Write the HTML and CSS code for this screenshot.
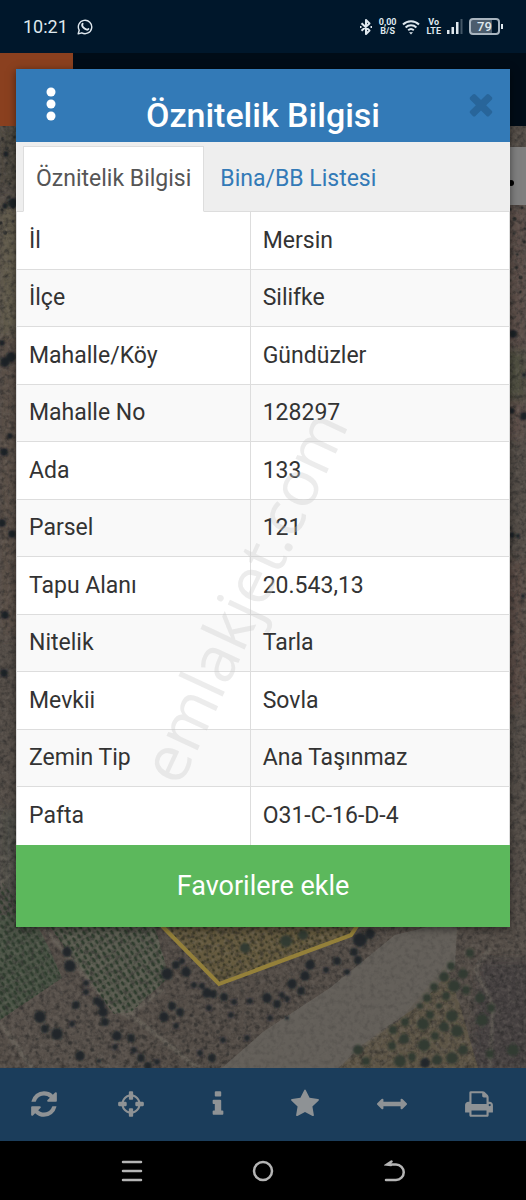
FILE: index.html
```
<!DOCTYPE html>
<html lang="tr">
<head>
    <meta charset="UTF-8">
    <meta name="viewport" content="width=device-width, initial-scale=1.0">
    <title>Öznitelik Bilgisi</title>
    <link rel="stylesheet" href="styles.css">
</head>
<body>
    <!-- Status bar -->
    <div class="status-bar">
        <span class="clock">10:21</span>
        <svg class="whatsapp" width="16" height="16" viewBox="0 0 16 16" fill="none" stroke="currentColor" stroke-width="1.4">
            <path d="M1.2 14.8l1-3.6A6.7 6.7 0 1 1 4.8 13.8z" stroke-linejoin="round"/>
            <path d="M5.6 4.8c-1 1.600.3 3.600 1.900 4.800s3.200 1.500 3.900.4" stroke-width="1.9" stroke-linecap="round"/>
        </svg>
        <div class="status-icons">
            <svg width="14" height="18" viewBox="0 0 14 18" fill="none" stroke="currentColor" stroke-width="2" stroke-linejoin="round">
                <path d="M2.500 5.200l8 7.300L7 16V2l3.500 3.500-8 7.300"/>
                <path d="M1 9h1.500M11.500 9H13"/>
            </svg>
            <span class="stacked">0,00<br>B/S</span>
            <svg width="18" height="16" viewBox="0 0 18 16" fill="none" stroke="currentColor" stroke-width="2">
                <path d="M1 5.500a11.500 11.500 0 0 1 16 0M3.600 8.500a7.800 7.800 0 0 1 10.800 0M6.200 11.200a4.200 4.200 0 0 1 5.600 0"/>
                <path d="M7 13.200h4l-2 2.300z" fill="currentColor" stroke="none"/>
            </svg>
            <span class="stacked">Vo<br>LTE</span>
            <svg width="16" height="17" viewBox="0 0 16 17" fill="currentColor">
                <rect x="0" y="12" width="2.500" height="4"/>
                <rect x="4.500" y="9" width="2.500" height="7"/>
                <rect x="9" y="4" width="2.500" height="12"/>
                <rect x="13.500" y="1" width="2" height="15" opacity=".3"/>
            </svg>
            <span class="battery">79</span>
        </div>
    </div>

    <main class="app">
        <div class="app-header"><div class="logo"></div></div>

        <!-- Satellite map -->
        <div class="map">
            <svg viewBox="0 126 526 942" preserveAspectRatio="xMidYMax slice" aria-hidden="true">
                <defs>
                    <filter id="grain" x="0" y="0" width="100%" height="100%" color-interpolation-filters="sRGB">
                        <feTurbulence type="fractalNoise" baseFrequency=".2" numOctaves="3" seed="8"/>
                        <feColorMatrix values="0 0 0 0 .14  0 0 0 0 .14  0 0 0 0 .14  2 0 0 0 -.85"/>
                    </filter>
                    <filter id="light" x="0" y="0" width="100%" height="100%" color-interpolation-filters="sRGB">
                        <feTurbulence type="fractalNoise" baseFrequency=".25" numOctaves="3" seed="31"/>
                        <feColorMatrix values="0 0 0 0 .5  0 0 0 0 .47  0 0 0 0 .44  1.800 0 0 0 -.75"/>
                    </filter>
                    <filter id="soft"><feGaussianBlur stdDeviation=".9"/></filter>
                    <filter id="haze"><feGaussianBlur stdDeviation="5"/></filter>
                    <pattern id="rows" width="7" height="6" patternUnits="userSpaceOnUse" patternTransform="rotate(58)">
                        <ellipse cx="3" cy="3" rx="2.600" ry="1.500" fill="#2b3a2b"/>
                    </pattern>
                    <pattern id="rows-wide" width="6" height="6" patternUnits="userSpaceOnUse" patternTransform="rotate(-28)">
                        <circle cx="3" cy="3" r="1.400" fill="#3d3b28"/>
                    </pattern>
                    <pattern id="scrub" width="23" height="27" patternUnits="userSpaceOnUse" patternTransform="rotate(17)">
                        <g fill="#2a2b2a">
                            <circle cx="4" cy="5" r="2"/>
                            <circle cx="17" cy="11" r="1.600"/>
                            <circle cx="8" cy="19" r="1.400"/>
                            <circle cx="20" cy="24" r="1.800"/>
                        </g>
                    </pattern>
                </defs>

                <rect y="126" width="526" height="942" fill="#544d47"/>
                <g filter="url(#haze)">
                    <path d="M0 126h22v60H0z" fill="#4c463d"/>
                    <path d="M0 205h22v130H0z" fill="#625c4b"/>
                    <path d="M0 335h22v300H0z" fill="#5a4f46"/>
                    <path d="M500 205h26v235h-26z" fill="#5d5049"/>
                    <path d="M500 350h26v50h-26z" fill="#504f40"/>
                    <path d="M500 560h26v150h-26z" fill="#5a4b45"/>
                    <path d="M0 810h22v120H0z" fill="#4e4e46"/>
                    <path d="M480 960h50v110h-60z" fill="#453f40"/>
                </g>
                <path d="M0 126h18v110H0zM508 205h18v90h-18z" fill="url(#scrub)"/>

                <!-- Fields -->
                <path d="M0 915h32l18 35 12 28L0 1020z" fill="#4b5446"/>
                <path d="M45 920h108l16 57-38 35-17 2z" fill="#5a5c50"/>
                <path d="M162 926l57 58 133-49 6-15z" fill="#655a3e"/>
                <path d="M395 935l62-15-2 45-35 40-40 26-22 18-20 19H222l41-36 67-44z" fill="#69655f"/>
                <path d="M400 1020l45-55 15 40 18 63H340l20-22z" fill="#5d5546"/>
                <path d="M0 1020l62-42 52 34 30 56H30z" fill="#57504a"/>
                <g fill="none" stroke="#6d685f" stroke-width="4" opacity=".75" filter="url(#soft)">
                    <path d="M38 920l25 30 48 58 17 8 35-27M128 1012l70 56M0 1023l32 45"/>
                    <path d="M457 926l-6 35-50 54-65 53M490 948l-15 22 18 35-3 62" stroke-width="3"/>
                    <path d="M0 857q14 2 10 18L0 883" stroke-width="2"/>
                </g>

                <rect y="126" width="526" height="942" filter="url(#grain)" opacity=".7"/>
                <rect y="126" width="526" height="942" filter="url(#light)" opacity=".4"/>

                <path d="M395 935l62-15-2 45-35 40-40 26-22 18-20 19H222l41-36 67-44z" fill="#625e59" opacity=".7"/>
                <path d="M0 880l32 40 30 58L0 1020z" fill="url(#rows)" opacity=".85"/>
                <path d="M45 920h108l16 57-38 35-17 2z" fill="url(#rows)" opacity=".9"/>
                <path d="M162 926l57 58 133-49 6-15z" fill="url(#rows-wide)"/>
                <path d="M30 1030l50-30 60 30 70-30 50 10-40 58H40z" fill="url(#scrub)" opacity=".6"/>

                <!-- Trees -->
                <g fill="#22282b" filter="url(#soft)">
                    <circle cx="67" cy="952" r="5"/><circle cx="70" cy="966" r="6"/><circle cx="86" cy="983" r="3"/>
                    <circle cx="86" cy="992" r="3"/><circle cx="97" cy="1001" r="4"/><circle cx="101" cy="1004" r="4"/>
                    <circle cx="103" cy="1012" r="5"/><circle cx="105" cy="1022" r="4"/><circle cx="40" cy="1017" r="6"/>
                    <circle cx="45" cy="1029" r="4"/><circle cx="57" cy="1034" r="6"/><circle cx="76" cy="1005" r="4"/>
                    <circle cx="72" cy="1024" r="3"/><circle cx="80" cy="1056" r="5"/><circle cx="99" cy="1061" r="2"/>
                    <circle cx="117" cy="1036" r="5"/><circle cx="131" cy="1038" r="4"/><circle cx="115" cy="1047" r="3"/>
                    <circle cx="134" cy="1050" r="3"/><circle cx="141" cy="1058" r="4"/><circle cx="157" cy="1062" r="3"/>
                    <circle cx="148" cy="1066" r="4"/><circle cx="167" cy="974" r="6"/><circle cx="176" cy="965" r="4"/>
                    <circle cx="186" cy="972" r="5"/><circle cx="182" cy="961" r="3"/><circle cx="172" cy="1006" r="4"/>
                    <circle cx="180" cy="1012" r="4"/><circle cx="164" cy="1017" r="5"/><circle cx="176" cy="1026" r="3"/>
                    <circle cx="194" cy="985" r="3"/><circle cx="202" cy="986" r="3"/><circle cx="207" cy="993" r="5"/>
                    <circle cx="213" cy="994" r="4"/><circle cx="224" cy="997" r="4"/><circle cx="234" cy="1002" r="3"/>
                    <circle cx="209" cy="1008" r="3"/><circle cx="250" cy="1001" r="3"/><circle cx="231" cy="1015" r="3"/>
                    <circle cx="223" cy="1040" r="3"/><circle cx="247" cy="1038" r="3"/><circle cx="200" cy="1053" r="3"/>
                    <circle cx="212" cy="1058" r="4"/><circle cx="370" cy="934" r="5"/><circle cx="360" cy="940" r="7"/>
                    <circle cx="354" cy="952" r="4"/><circle cx="358" cy="960" r="4"/><circle cx="337" cy="961" r="4"/>
                    <circle cx="347" cy="972" r="3"/><circle cx="326" cy="970" r="3"/><circle cx="310" cy="965" r="5"/>
                    <circle cx="305" cy="976" r="5"/><circle cx="292" cy="984" r="5"/><circle cx="301" cy="991" r="4"/>
                    <circle cx="267" cy="998" r="5"/><circle cx="282" cy="995" r="3"/><circle cx="287" cy="999" r="3"/>
                    <circle cx="277" cy="1004" r="4"/><circle cx="270" cy="1018" r="3"/><circle cx="287" cy="1018" r="2"/>
                    <circle cx="425" cy="1063" r="5"/>
                </g>
                <g fill="#303a32" filter="url(#soft)">
                    <circle cx="245" cy="948" r="5"/><circle cx="286" cy="941" r="6"/><circle cx="303" cy="935" r="5"/>
                    <circle cx="451" cy="966" r="4"/><circle cx="444" cy="977" r="5"/><circle cx="454" cy="986" r="6"/>
                    <circle cx="434" cy="987" r="4"/><circle cx="446" cy="996" r="4"/><circle cx="427" cy="998" r="4"/>
                    <circle cx="439" cy="1006" r="3"/><circle cx="420" cy="1006" r="3"/><circle cx="452" cy="1016" r="6"/>
                    <circle cx="430" cy="1015" r="4"/><circle cx="423" cy="1024" r="6"/><circle cx="405" cy="1022" r="4"/>
                    <circle cx="393" cy="1030" r="4"/><circle cx="444" cy="1027" r="5"/><circle cx="457" cy="1031" r="6"/>
                    <circle cx="435" cy="1036" r="4"/><circle cx="404" cy="1039" r="5"/><circle cx="424" cy="1045" r="6"/>
                    <circle cx="392" cy="1046" r="4"/><circle cx="463" cy="1050" r="5"/><circle cx="412" cy="1057" r="4"/>
                    <circle cx="400" cy="1061" r="6"/><circle cx="437" cy="1060" r="5"/><circle cx="452" cy="1058" r="6"/>
                    <circle cx="358" cy="1050" r="5"/><circle cx="366" cy="1061" r="4"/><circle cx="490" cy="1054" r="4"/>
                    <circle cx="513" cy="1050" r="6"/><circle cx="482" cy="1020" r="6"/><circle cx="491" cy="1008" r="4"/>
                    <circle cx="480" cy="998" r="5"/><circle cx="463" cy="974" r="5"/><circle cx="466" cy="990" r="4"/>
                    <circle cx="470" cy="953" r="4"/>
                </g>
                <!-- Trees on the side strips -->
                <g fill="#1c2226" filter="url(#soft)">
                    <circle cx="6" cy="154" r="3"/><circle cx="13" cy="203" r="5"/><circle cx="5" cy="206" r="3"/>
                    <circle cx="2" cy="343" r="3"/><circle cx="5" cy="362" r="5"/><circle cx="11" cy="357" r="5"/>
                    <circle cx="10" cy="436" r="3"/><circle cx="4" cy="452" r="4"/><circle cx="2" cy="523" r="4"/>
                    <circle cx="12" cy="534" r="4"/><circle cx="5" cy="615" r="4"/><circle cx="4" cy="673" r="4"/>
                    <circle cx="513" cy="334" r="4"/><circle cx="512" cy="411" r="3"/>
                    <circle cx="524" cy="416" r="4"/><circle cx="524" cy="375" r="2"/><circle cx="512" cy="535" r="3"/>
                    <circle cx="518" cy="536" r="2"/><circle cx="523" cy="596" r="2"/>
                </g>

                <path d="M162 926l57 58 132-49 8-12" fill="none" stroke="#94803a" stroke-width="4"/>
                <path d="M500 147h26v58h-26z" fill="#7f7f7f"/>
                <circle cx="511" cy="183" r="3"/>
            </svg>
        </div>

        <nav class="toolbar">
            <button aria-label="Yenile"><svg viewBox="0 0 1792 1792"><path d="M1639 1056q0 5-1 7-64 268-268 434.5t-478 166.5q-146 0-282.5-55t-243.5-157l-129 129q-19 19-45 19t-45-19-19-45v-448q0-26 19-45t45-19h448q26 0 45 19t19 45-19 45l-137 137q71 66 161 102t187 36q134 0 250-65t186-179q11-17 53-117 8-23 30-23h192q13 0 22.5 9.5t9.5 22.5zm25-800v448q0 26-19 45t-45 19h-448q-26 0-45-19t-19-45 19-45l138-138q-148-137-349-137-134 0-250 65t-186 179q-11 17-53 117-8 23-30 23h-199q-13 0-22.5-9.5t-9.5-22.5v-7q65-268 270-434.5t480-166.5q146 0 284 55.5t245 156.5l130-129q19-19 45-19t45 19 19 45z"/></svg></button>
            <button aria-label="Konum"><svg viewBox="0 0 1792 1792"><path d="M1325 1024h-109q-26 0-45-19t-19-45v-128q0-26 19-45t45-19h109q-32-108-112.5-188.5t-188.5-112.5v109q0 26-19 45t-45 19h-128q-26 0-45-19t-19-45v-109q-108 32-188.5 112.5t-112.5 188.5h109q26 0 45 19t19 45v128q0 26-19 45t-45 19h-109q32 108 112.5 188.5t188.5 112.5v-109q0-26 19-45t45-19h128q26 0 45 19t19 45v109q108-32 188.5-112.5t112.5-188.5zm339-192v128q0 26-19 45t-45 19h-143q-37 161-154.5 278.5t-278.5 154.5v143q0 26-19 45t-45 19h-128q-26 0-45-19t-19-45v-143q-161-37-278.5-154.5t-154.5-278.5h-143q-26 0-45-19t-19-45v-128q0-26 19-45t45-19h143q37-161 154.5-278.5t278.5-154.5v-143q0-26 19-45t45-19h128q26 0 45 19t19 45v143q161 37 278.5 154.5t154.5 278.5h143q26 0 45 19t19 45z"/></svg></button>
            <button aria-label="Bilgi"><svg viewBox="0 0 1792 1792"><path d="M1216 1344v128q0 26-19 45t-45 19h-512q-26 0-45-19t-19-45v-128q0-26 19-45t45-19h64v-384h-64q-26 0-45-19t-19-45v-128q0-26 19-45t45-19h384q26 0 45 19t19 45v576h64q26 0 45 19t19 45zm-128-1152v192q0 26-19 45t-45 19h-256q-26 0-45-19t-19-45v-192q0-26 19-45t45-19h256q26 0 45 19t19 45z"/></svg></button>
            <button aria-label="Favoriler"><svg viewBox="0 0 1792 1792"><path d="M1728 647q0 22-26 48l-363 354 86 500q1 7 1 20 0 21-10.5 35.5t-30.5 14.5q-19 0-40-12l-449-236-449 236q-22 12-40 12-21 0-31.5-14.5t-10.5-35.5q0-6 2-20l86-500-364-354q-25-27-25-48 0-37 56-46l502-73 225-455q19-41 49-41t49 41l225 455 502 73q56 9 56 46z"/></svg></button>
            <button aria-label="Ölçüm"><svg viewBox="0 0 1792 1792"><path d="M1792 896q0 26-19 45l-256 256q-19 19-45 19t-45-19-19-45v-128h-1024v128q0 26-19 45t-45 19-45-19l-256-256q-19-19-19-45t19-45l256-256q19-19 45-19t45 19 19 45v128h1024v-128q0-26 19-45t45-19 45 19l256 256q19 19 19 45z"/></svg></button>
            <button aria-label="Yazdır"><svg viewBox="0 0 1792 1792"><path d="M448 1536h896v-256h-896v256zm0-640h896v-384h-160q-40 0-68-28t-28-68v-160h-640v640zm1152 64q0-26-19-45t-45-19-45 19-19 45 19 45 45 19 45-19 19-45zm128 0v416q0 13-9.5 22.5t-22.5 9.5h-224v160q0 40-28 68t-68 28h-960q-40 0-68-28t-28-68v-160h-224q-13 0-22.5-9.5t-9.5-22.5v-416q0-79 56.5-135.5t135.5-56.5h64v-544q0-40 28-68t68-28h672q40 0 88 20t76 48l152 152q28 28 48 76t20 88v256h64q79 0 135.5 56.5t56.5 135.5z"/></svg></button>
        </nav>

        <!-- Parcel info dialog -->
        <section class="modal" role="dialog" aria-labelledby="modal-title">
            <header class="modal-header">
                <button class="menu-btn" aria-label="Menü">
                    <svg width="10" height="34" viewBox="0 0 10 34" fill="currentColor">
                        <circle cx="5" cy="5" r="4.500"/><circle cx="5" cy="17" r="4.500"/><circle cx="5" cy="29" r="4.500"/>
                    </svg>
                </button>
                <h1 id="modal-title">Öznitelik Bilgisi</h1>
                <button class="close-btn" aria-label="Kapat"><svg viewBox="0 0 1792 1792"><path d="M1490 1322q0 40-28 68l-136 136q-28 28-68 28t-68-28l-294-294-294 294q-28 28-68 28t-68-28l-136-136q-28-28-28-68t28-68l294-294-294-294q-28-28-28-68t28-68l136-136q28-28 68-28t68 28l294 294 294-294q28-28 68-28t68 28l136 136q28 28 28 68t-28 68l-294 294 294 294q28 28 28 68z"/></svg></button>
            </header>

            <div class="tabs">
                <a href="#oznitelik" class="tab active">Öznitelik Bilgisi</a>
                <a href="#bina" class="tab">Bina/BB Listesi</a>
            </div>

            <table class="info-table" id="oznitelik">
                <tbody>
                    <tr><th scope="row">İl</th><td>Mersin</td></tr>
                    <tr><th scope="row">İlçe</th><td>Silifke</td></tr>
                    <tr><th scope="row">Mahalle/Köy</th><td>Gündüzler</td></tr>
                    <tr><th scope="row">Mahalle No</th><td>128297</td></tr>
                    <tr><th scope="row">Ada</th><td>133</td></tr>
                    <tr><th scope="row">Parsel</th><td>121</td></tr>
                    <tr><th scope="row">Tapu Alanı</th><td>20.543,13</td></tr>
                    <tr><th scope="row">Nitelik</th><td>Tarla</td></tr>
                    <tr><th scope="row">Mevkii</th><td>Sovla</td></tr>
                    <tr><th scope="row">Zemin Tip</th><td>Ana Taşınmaz</td></tr>
                    <tr><th scope="row">Pafta</th><td>O31-C-16-D-4</td></tr>
                </tbody>
            </table>

            <button class="favorite-btn">Favorilere ekle</button>
            <span class="watermark">emlakjet.com</span>
        </section>
    </main>

    <!-- Android navigation -->
    <div class="system-nav">
        <button aria-label="Son uygulamalar">
            <svg width="22" height="22" viewBox="0 0 22 22"><path d="M2 2h18M2 11h18M2 20h18"/></svg>
        </button>
        <button aria-label="Ana ekran">
            <svg width="22" height="22" viewBox="0 0 22 22"><circle cx="11" cy="11" r="9"/></svg>
        </button>
        <button aria-label="Geri">
            <svg width="22" height="22" viewBox="0 0 22 22"><path d="M2 20h10a7.500 7.500 0 0 0 0-15.500H4M7.500 1.500L3 4.500l4 .5"/></svg>
        </button>
    </div>
</body>
</html>
```
FILE: styles.css
```
* {
    box-sizing: border-box;
}

body {
    margin: 0;
    min-height: 100vh;
    display: flex;
    flex-direction: column;
    background: #000;
    font-family: Roboto, "Liberation Sans", sans-serif;
}

button {
    display: flex;
    align-items: center;
    justify-content: center;
    padding: 0;
    border: none;
    background: none;
    font: inherit;
    cursor: pointer;
}

/* --- Status Bar --- */
.status-bar {
    height: 53px;
    display: flex;
    align-items: center;
    padding: 0 26px 0 23px;
    background: #00172b;
    color: #dfe8ee;
}

.clock {
    font-size: 18px;
}

.whatsapp {
    margin-left: 9px;
}

.status-icons {
    display: flex;
    align-items: center;
    gap: 6px;
    margin-left: auto;
}

.stacked {
    font-size: 9px;
    line-height: 9px;
    font-weight: 700;
    text-align: center;
}

.battery {
    position: relative;
    width: 31px;
    border: 2px solid #a9b5bf;
    border-radius: 4px;
    background: linear-gradient(90deg, #4c5d6d 79%, transparent 79%);
    font-size: 13px;
    line-height: 13px;
    font-weight: 500;
    text-align: center;
}

.battery::after {
    content: "";
    position: absolute;
    top: 4px;
    right: -5px;
    width: 2px;
    height: 5px;
    background: #dfe8ee;
}

/* --- App --- */
.app {
    position: relative;
    flex: 1;
    display: flex;
    flex-direction: column;
}

.app-header {
    height: 73px;
    background: #000c17;
}

.logo {
    width: 73px;
    height: 100%;
    background: #8a401f;
}

.map {
    position: relative;
    flex: 1;
    overflow: hidden;
    background: #544d47;
}

.map svg {
    position: absolute;
    width: 100%;
    height: 100%;
}

.toolbar {
    height: 73px;
    display: grid;
    grid-template-columns: repeat(6, 1fr);
    padding: 0 3px 2px 0;
    background: #1b3d5b;
}

.toolbar svg {
    width: 30px;
    height: 30px;
    fill: #8e9295;
}

/* --- Modal --- */
.modal {
    position: absolute;
    top: 16px;
    left: 16px;
    right: 16px;
    background: #fff;
    box-shadow: 0 2px 8px rgba(0, 0, 0, 0.5);
}

.modal-header {
    height: 73px;
    display: grid;
    grid-template-columns: 70px 1fr 70px;
    background: #337ab7;
    color: #fff;
}

.modal-header h1 {
    margin: 0;
    padding-top: 20px;
    font-size: 34px;
    line-height: 53px;
    font-weight: 500;
    text-align: center;
}

.menu-btn,
.close-btn {
    padding-bottom: 4px;
}

.menu-btn {
    color: #fff;
}

.close-btn {
    padding-left: 12px;
}

.close-btn svg {
    width: 34px;
    height: 34px;
    fill: #28659a;
}

/* --- Tabs --- */
.tabs {
    height: 70px;
    display: flex;
    gap: 3px;
    padding: 4px 7px 0;
    border-bottom: 1px solid #ddd;
    background: #eee;
}

.tab {
    height: 66px;
    padding: 0 12px;
    border: 1px solid transparent;
    color: #337ab7;
    font-size: 23px;
    line-height: 64px;
    text-decoration: none;
}

.tab.active {
    border-color: #ddd;
    border-bottom-color: #fff;
    background: #fff;
    color: #555;
}

/* --- Info Table --- */
.info-table {
    width: 100%;
    border: 1px solid #ddd;
    border-width: 0 1px;
    border-collapse: separate;
    border-spacing: 0;
    table-layout: fixed;
    color: #333;
    font-size: 23px;
    line-height: 28px;
}

.info-table tr {
    height: 58px;
}

.info-table tr:nth-child(even) {
    height: 57px;
    background: #f9f9f9;
}

.info-table th,
.info-table td {
    padding: 0 12px;
    border-bottom: 1px solid #ddd;
    font-weight: 400;
    text-align: left;
}

.info-table th {
    width: 47.5%;
    border-right: 1px solid #ddd;
}

.info-table tr:last-child > * {
    border-bottom: none;
}

.favorite-btn {
    width: 100%;
    height: 82px;
    background: #5cb85c;
    color: #fff;
    font-size: 27px;
}

.watermark {
    position: absolute;
    top: 527px;
    left: 227px;
    color: rgba(200, 200, 200, 0.35);
    font-family: "Open Sans", sans-serif;
    font-size: 64px;
    line-height: 1;
    transform: translate(-50%, -50%) rotate(-65deg);
    pointer-events: none;
}

/* --- System Navigation --- */
.system-nav {
    height: 59px;
    display: grid;
    grid-template-columns: repeat(3, 1fr);
    padding: 0 12.5%;
    background: #000;
}

.system-nav svg {
    fill: none;
    stroke: #b5b5b5;
    stroke-width: 2.5;
    stroke-linecap: round;
}
```
